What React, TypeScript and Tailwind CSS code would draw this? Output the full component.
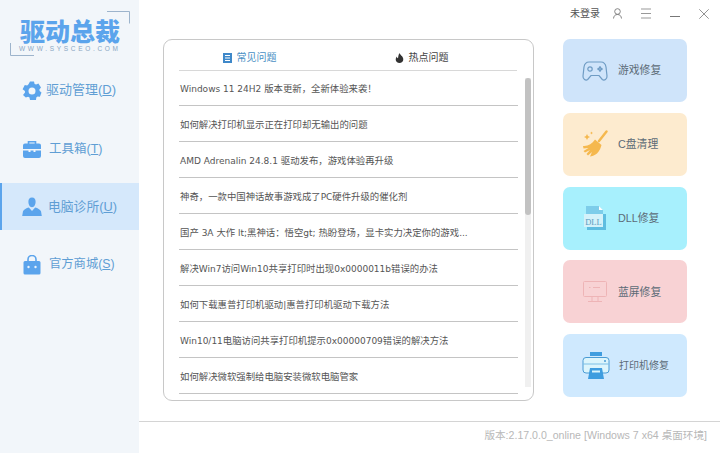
const rows = [
  "Windows 11 24H2 版本更新，全新体验来袭！",
  "如何解决打印机显示正在打印却无输出的问题",
  "AMD Adrenalin 24.8.1 驱动发布，游戏体验再升级",
  "神奇，一款中国神话故事游戏成了PC硬件升级的催化剂",
  "国产 3A 大作 lt;黑神话：悟空gt; 热盼登场，显卡实力决定你的游戏...",
  "解决Win7访问Win10共享打印时出现0x0000011b错误的办法",
  "如何下载惠普打印机驱动|惠普打印机驱动下载方法",
  "Win10/11电脑访问共享打印机提示0x00000709错误的解决方法",
  "如何解决微软强制给电脑安装微软电脑管家",
];

const Row = ({ text }: { text: string }) => (
  <>
    {text.split(/([\u4e00-\u9fff，：！]+)/).map((part, i) =>
      i % 2 === 1 ? (
        <span key={i} className="text-[9.400px] font-['Noto_Sans_CJK_SC',sans-serif]">{part}</span>
      ) : (
        <span key={i} className="text-[9px] whitespace-pre font-['DejaVu_Sans',sans-serif]">{part}</span>
      )
    )}
  </>
);

const Gear = () => (
  <svg width="20" height="20" viewBox="0 0 20 20">
    <path fill="#5ba4ec" fillRule="evenodd" d="M8 .5h4l.6 2.400 1.500.7L16.400 2.500 19 6.500l-1.600 1.900.2 1.600 1.900 1.500-1.600 4.200-2.400-.2-1.200 1.100-.3 2.400H8l-.5-2.400-1.400-.8-2.300.8L1 14l2-2.400-.1-1.700L.6 8.300 2.800 4.100l2.400.3 1.300-1.100zM10 6.500a3.500 3.500 0 1 0 0 7 3.500 3.500 0 0 0 0-7z" />
  </svg>
);
const Toolbox = () => (
  <svg width="20" height="19" viewBox="0 0 20 19">
    <path fill="none" stroke="#5ba4ec" strokeWidth="1.600" d="M6.500 4V1.800h7V4" />
    <path fill="#5ba4ec" d="M1 5.500a2 2 0 0 1 2-2h14a2 2 0 0 1 2 2V9H1zM1 10.500h5.500V12h2v-1.500h3V12h2v-1.500H19V16a2 2 0 0 1-2 2H3a2 2 0 0 1-2-2z" />
  </svg>
);
const Person = () => (
  <svg width="20" height="20" viewBox="0 0 20 20">
    <path fill="#5ba4ec" d="M10 .5c2.600 0 3.600 1.800 3.600 4.200 0 2.500-1.300 5.500-3.600 5.500S6.400 7.200 6.400 4.700C6.400 2.300 7.400.5 10 .5zM6.800 10.500 10 14l3.200-3.500c2.500.7 4.800 1.800 5.800 3.700l.8 4.800H.2l.8-4.800c1-1.900 3.300-3 5.800-3.700z" />
  </svg>
);
const Bag = () => (
  <svg width="18" height="20" viewBox="0 0 18 20">
    <path fill="none" stroke="#5ba4ec" strokeWidth="1.600" d="M5 7V4.500a4 4 0 0 1 8 0V7" />
    <path fill="#5ba4ec" d="M2 6h14a1.500 1.500 0 0 1 1.500 1.500V18a1.500 1.500 0 0 1-1.500 1.500H2A1.500 1.500 0 0 1 .5 18V7.500A1.500 1.500 0 0 1 2 6z" />
    <circle cx="5.500" cy="12" r="1.200" fill="#eaf3fc" />
    <circle cx="12.500" cy="12" r="1.200" fill="#eaf3fc" />
  </svg>
);
const Pad = () => (
  <svg width="26" height="22" viewBox="0 0 26 22" fill="none" stroke="#6f9cc4" strokeWidth="1.200">
    <path d="M7 2h12c3 0 4.500 2 5 5l1 9c.3 3-2.700 5-4.700 3.500L17 15.500H9L5.700 19.500C3.700 21 .7 19 1 16l1-9c.5-3 2-5 5-5z" />
    <circle cx="8" cy="9" r="2.200" />
    <circle cx="18" cy="7.500" r=".6" />
    <circle cx="18" cy="10.500" r=".6" />
    <circle cx="16.500" cy="9" r=".6" />
    <circle cx="19.500" cy="9" r=".6" />
  </svg>
);
const Broom = () => (
  <svg width="26" height="28" viewBox="0 0 26 28">
    <path d="M24.500 1.500 17 11" stroke="#f5b84e" strokeWidth="2.400" strokeLinecap="round" />
    <path fill="#f5b84e" d="M13 9.500l6.500 5.500c-1 3-1.500 5.500-4.500 8.500-2.500 2-5.500 3-7 3L10 22l-4 3.500-1.500-1.500L8 20l-5 2.500L1.500 21l5-3-5 .5L1 16c5 .5 9-2 12-6.500z" />
    <path fill="#f5b84e" d="M5 4l1 2 2 1-2 1-1 2-1-2-2-1 2-1zM9.500 1.500l.5 1 1 .5-1 .5-.5 1-.5-1-1-.5 1-.5z" />
  </svg>
);
const Dll = () => (
  <svg width="22" height="24" viewBox="0 0 22 24">
    <path fill="#7dcdea" d="M2 0h13l4 4v17H2z" />
    <path fill="#ffffff" d="M15 0l4 4h-4z" />
    <rect x="0" y="8" width="19" height="13" fill="#d4f2fa" />
    <path fill="#5fbde0" d="M3 21h19v3H3zM19 8h3v14h-3z" />
    <text x="9.500" y="18.500" textAnchor="middle" fontSize="8.500" fill="#5b9cc0" fontFamily="Liberation Serif, serif">DLL</text>
  </svg>
);
const Monitor = () => (
  <svg width="24" height="24" viewBox="0 0 24 24" fill="none" stroke="#eeb4b6" strokeWidth="1">
    <rect x=".5" y="1.500" width="23" height="15" rx="1" />
    <path d="M6 7.500h1.500M10 7.500h7M9 16.500V21M15 16.500V21M5 21.500h14" />
  </svg>
);
const Printer = () => (
  <svg width="28" height="28" viewBox="0 0 28 28">
    <rect x="8" y="0" width="12" height="4" fill="#3f9ddf" />
    <path fill="#dcf5fc" stroke="#4a9bd4" strokeWidth="1" d="M4 5.500h20a3 3 0 0 1 3 3V18a3 3 0 0 1-3 3H4a3 3 0 0 1-3-3V8.500a3 3 0 0 1 3-3z" />
    <path d="M1 12h26" stroke="#7cc0e6" strokeWidth="1" />
    <circle cx="23" cy="9" r="1" fill="#4a9bd4" />
    <path fill="#3f9ddf" d="M8 16h12l2 11H6z" />
    <path fill="#dcf5fc" d="M10 18.500h8v2h-8z" />
  </svg>
);

const Tile = ({ bg, icon, label, iconW, text }: { bg: string; icon: React.ReactNode; label: string; iconW: string; text: string }) => (
  <div className={`${bg} h-[63px] w-[124px] rounded-[7px] flex items-center pl-[19px]`}>
    <div className={`${iconW} flex justify-center shrink-0`}>{icon}</div>
    <span className={`${text} text-[#5c6b77] whitespace-nowrap`}>{label}</span>
  </div>
);

const NavItem = ({ icon, label, hot, active, cls, textCls }: { icon: React.ReactNode; label: string; hot: string; active?: boolean; cls: string; textCls: string }) => (
  <div className={`${cls} flex items-center h-[47px] ${active ? "bg-[#d5e8fb] border-l-2 border-[#5ba4ec] pl-[20px]" : "pl-[22px]"}`}>
    <div className="w-[20px] flex justify-center shrink-0">{icon}</div>
    <span className={`${textCls} text-[#5f9ed4] whitespace-nowrap`}>
      {label}(<span className="underline">{hot}</span>)
    </span>
  </div>
);

export default function App() {
  return (
    <div className="w-[720px] h-[453px] flex bg-white overflow-hidden font-['Liberation_Sans','Noto_Sans_CJK_SC',sans-serif]">
      <aside className="w-[139px] shrink-0 bg-[#f2f6fa] flex flex-col">
        <div className="relative h-[56px] mt-[11px] ml-[10px] w-[122px]">
          <div className="pl-[10px] pt-[7px] text-[25px] leading-[24px] font-black text-[#5ba4ec] whitespace-nowrap font-['Noto_Sans_CJK_SC',sans-serif]">驱动总裁</div>
          <div className="pl-[9px] mt-[3px] text-[6.500px] leading-[8px] tracking-[2.700px] text-[#8aa6c2] whitespace-nowrap">WWW.SYSCEO.COM</div>
          <svg className="absolute left-0 top-0" width="122" height="46" viewBox="0 0 122 46" fill="none" stroke="#9db4cc" strokeWidth="1">
            <path d="M97 .5h22.500v12M.5 32v12.500H24" />
          </svg>
        </div>
        <NavItem cls="mt-[0px]" textCls="ml-[4px] mb-[2px] text-[13px]" icon={<Gear />} label="驱动管理" hot="D" />
        <NavItem cls="mt-[12px]" textCls="ml-[7px] mb-[1px] text-[12.500px]" icon={<Toolbox />} label="工具箱" hot="T" />
        <NavItem cls="mt-[10px]" textCls="ml-[6px] text-[12.800px]" icon={<Person />} label="电脑诊所" hot="U" active />
        <NavItem cls="mt-[11px]" textCls="ml-[7px] text-[12.300px]" icon={<Bag />} label="官方商城" hot="S" />
      </aside>

      <main className="flex-1 flex flex-col min-w-0">
        <div className="h-[27px] flex items-center justify-end text-[#555]">
          <span className="text-[10px] mr-[13px]">未登录</span>
          <svg className="mr-[19px]" width="9" height="11" viewBox="0 0 9 11" fill="none" stroke="#777" strokeWidth=".9">
            <circle cx="4.500" cy="3.500" r="2.800" />
            <path d="M.5 10.500c.3-2.500 1.500-4 4-4s3.700 1.500 4 4" />
          </svg>
          <svg className="mr-[19px]" width="10" height="11" viewBox="0 0 10 11" stroke="#999" strokeWidth="1">
            <path d="M0 1h10M0 5.500h10M0 10h10" />
          </svg>
          <svg className="mr-[19px]" width="10" height="11" viewBox="0 0 10 11" stroke="#777" strokeWidth="1">
            <path d="M0 8.500h10" />
          </svg>
          <svg className="mr-[11px]" width="10" height="10" viewBox="0 0 10 10" stroke="#777" strokeWidth=".8">
            <path d="M.3.300l9.400 9.400M9.700.300L.3 9.700" />
          </svg>
        </div>

        <div className="flex-1 flex min-h-0 pl-[24px] pt-[12px]">
          <section className="w-[371px] h-[362px] border border-[#c8c8c8] rounded-[9px] flex flex-col overflow-hidden">
            <div className="h-[31px] pt-[5px] flex ml-[15px] mr-[16px] border-b border-[#d8d8d8] shrink-0">
              <div className="w-[140px] flex items-center justify-center pl-[1px] text-[10px] text-[#4a8fc4]">
                <svg className="mr-[5px]" width="9" height="10" viewBox="0 0 9 10">
                  <rect width="9" height="10" fill="#3f88c9" />
                  <path d="M2 2.500h5M2 5h5M2 7.500h5" stroke="#fff" strokeWidth="1" />
                </svg>
                常见问题
              </div>
              <div className="flex-1 flex items-center justify-center pl-[7px] text-[10px] text-[#444]">
                <svg className="mr-[5px]" width="9" height="10" viewBox="0 0 9 10">
                  <path fill="#333" d="M4.500 0c.5 2 3.500 3 3.800 6 .2 2.500-1.800 4-3.800 4S.5 8.500.7 6.300C.8 5 1.500 4 2 3.500c0 1 .3 1.500 1 1.800C3.300 3.500 3.500 1.500 4.500 0z" />
                </svg>
                热点问题
              </div>
            </div>
            <div className="flex-1 flex min-h-0">
              <ul className="w-[339px] ml-[15px] -mt-px shrink-0">
                {rows.map((r) => (
                  <li key={r} className="h-[36px] pt-[1px] border-b border-[#c4c4c4] flex items-center pl-[1px] text-[#555] whitespace-nowrap overflow-hidden">
                    <div className="text-[9.400px] leading-[14px]"><Row text={r} /></div>
                  </li>
                ))}
              </ul>
              <div className="ml-[7px] w-[6px] mt-[7px] mb-[13px] bg-[#f0f0f0]">
                <div className="h-[137px] w-full bg-[#c2c2c2] rounded-[3px]" />
              </div>
            </div>
          </section>

          <div className="ml-[29px] flex flex-col gap-[10.750px]">
            <Tile bg="bg-[#cfe4fa]" iconW="w-[26px]" text="ml-[10px] text-[10.800px]" icon={<Pad />} label="游戏修复" />
            <Tile bg="bg-[#fdebcf]" iconW="w-[26px]" text="ml-[10px] text-[10.800px]" icon={<Broom />} label="C盘清理" />
            <Tile bg="bg-[#a7f0fd]" iconW="w-[26px]" text="ml-[10px] text-[10.800px]" icon={<Dll />} label="DLL修复" />
            <Tile bg="bg-[#f8d2d4]" iconW="w-[26px]" text="ml-[10px] text-[10.800px]" icon={<Monitor />} label="蓝屏修复" />
            <Tile bg="bg-[#cfe9fe]" iconW="w-[28px]" text="ml-[9px] text-[10px]" icon={<Printer />} label="打印机修复" />
          </div>
        </div>

        <footer className="h-[32px] pb-[3px] border-t border-[#d4d4d4] flex items-center justify-end pr-[13px] text-[10.600px] text-[#b8b8b8] whitespace-nowrap shrink-0">
          版本:2.17.0.0_online [Windows 7 x64 桌面环境]
        </footer>
      </main>
    </div>
  );
}
